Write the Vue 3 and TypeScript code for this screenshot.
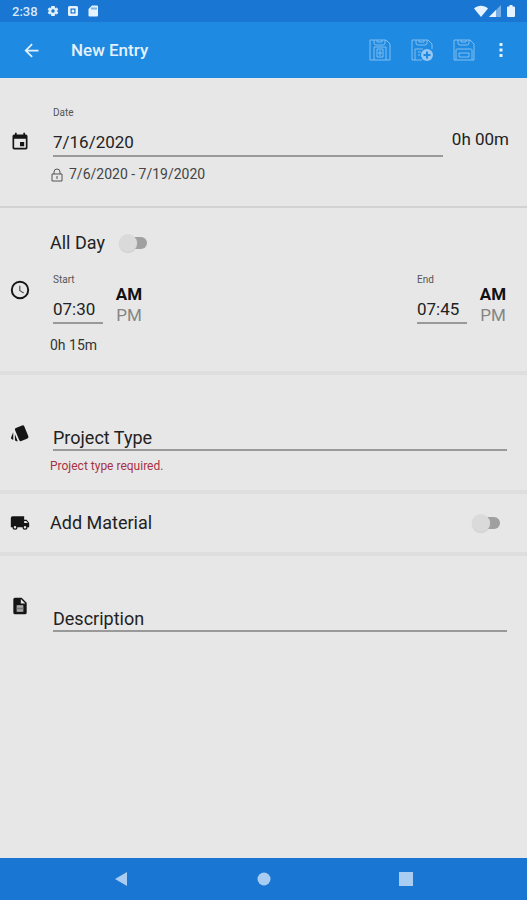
<script setup lang="ts">
import { ref } from 'vue'

type Meridiem = 'AM' | 'PM'
interface TimeEntry {
  id: string
  label: string
  time: string
  meridiem: Meridiem
}

const meridiems: Meridiem[] = ['AM', 'PM']
const date = ref('7/16/2020')
const allDay = ref(false)
const addMaterial = ref(false)
const projectType = ref('')
const description = ref('')
const times = ref<TimeEntry[]>([
  { id: 'start', label: 'Start', time: '07:30', meridiem: 'AM' },
  { id: 'end', label: 'End', time: '07:45', meridiem: 'AM' },
])
</script>

<template>
  <div class="screen">
    <div class="status-bar">
      <span class="clock">2:38</span>
      <svg class="status-icon" viewBox="0 0 24 24"><path stroke="#e6f2fd" stroke-width="2" stroke-linejoin="round" fill-rule="evenodd" d="M19.4 13a7.500 7.500 0 0 0 0-2l2.100-1.600-2-3.500-2.500 1a7.300 7.300 0 0 0-1.700-1L15 3h-6l-.4 2.900a7.300 7.300 0 0 0-1.700 1l-2.500-1-2 3.500L4.600 11a7.500 7.500 0 0 0 0 2l-2.100 1.600 2 3.500 2.500-1a7.300 7.300 0 0 0 1.700 1L9 21h6l.4-2.900a7.300 7.300 0 0 0 1.700-1l2.500 1 2-3.500zM12 7.500a4.500 4.500 0 1 1 0 9 4.500 4.500 0 0 1 0-9z" /></svg>
      <svg class="status-icon" viewBox="0 0 24 24"><path fill-rule="evenodd" d="M5 2h14a3 3 0 0 1 3 3v14a3 3 0 0 1-3 3H5a3 3 0 0 1-3-3V5a3 3 0 0 1 3-3zM7 7v10h10V7zM12 9a3 3 0 1 1 0 6 3 3 0 0 1 0-6z" /></svg>
      <svg class="status-icon" viewBox="0 0 24 24"><path fill-rule="evenodd" d="M20 1H10L3 8v13a2 2 0 0 0 2 2h15a2 2 0 0 0 2-2V3a2 2 0 0 0-2-2zM9 5h2v4H9zM13 5h2v4h-2zM17 5h2v4h-2z" /></svg>
      <span class="spacer"></span>
      <svg class="wifi" viewBox="0 0 14 12"><path d="M0 3.500C4-.3 10-.3 14 3.500L7 12z" /></svg>
      <svg class="signal" viewBox="0 0 12 12"><path opacity=".45" d="M12 0v12H0z" /><path d="M7 5v7H0z" /></svg>
      <svg class="battery" viewBox="0 0 8 12"><path d="M2.500 0h3v1.500H7a1 1 0 0 1 1 1V11a1 1 0 0 1-1 1H1a1 1 0 0 1-1-1V2.500a1 1 0 0 1 1-1h1.500z" /></svg>
    </div>

    <header class="app-bar">
      <button class="back" type="button" aria-label="Back">
        <svg viewBox="0 0 24 24"><path d="M20 11H7.800l5.600-5.600L12 4l-8 8 8 8 1.400-1.400L7.800 13H20z" /></svg>
      </button>
      <h1>New Entry</h1>
      <span class="spacer"></span>
      <button class="action" type="button" aria-label="Save and close">
        <svg viewBox="0 0 22 22"><path d="M1 1h16l4 4v16H1zM5 1v3a2 2 0 0 0 2 2h7a2 2 0 0 0 2-2V1M8 1v2h5V1M5 21V8h12v13M8 10h6v8H8zM11 11v6M9 14h4" /></svg>
      </button>
      <button class="action" type="button" aria-label="Save and add">
        <svg viewBox="0 0 22 22"><path d="M11 21H1V1h16l4 4v5M5 1v3a2 2 0 0 0 2 2h7a2 2 0 0 0 2-2V1M8 1v2h5V1M4 21V10h8M7 13h3M7 16h2" /><circle class="disc" cx="16" cy="16" r="6" /><path class="plus" d="M16 12.500v7M12.500 16h7" /></svg>
      </button>
      <button class="action" type="button" aria-label="Save">
        <svg viewBox="0 0 22 22"><path d="M1 1h16l4 4v16H1zM5 1v3a2 2 0 0 0 2 2h7a2 2 0 0 0 2-2V1M8 1v2h5V1M3 21V11a1 1 0 0 1 1-1h14a1 1 0 0 1 1 1v10M6 14h10v4H6z" /></svg>
      </button>
      <button class="more" type="button" aria-label="More options">
        <svg viewBox="0 0 4 16"><path d="M.5 1h3v3h-3zM.5 6.500h3v3h-3zM.5 12h3v3h-3z" /></svg>
      </button>
    </header>

    <main>
      <section class="row date-row">
        <svg class="row-icon" viewBox="0 0 24 24"><path d="M17 12h-5v5h5zM16 1v2H8V1H6v2H5a2 2 0 0 0-2 2v14a2 2 0 0 0 2 2h14a2 2 0 0 0 2-2V5a2 2 0 0 0-2-2h-1V1zM19 19H5V8h14z" /></svg>
        <div class="content">
          <div class="date-line">
            <div class="field grow">
              <label for="date">Date</label>
              <input id="date" v-model="date" type="text" />
            </div>
            <span class="total">0h 00m</span>
          </div>
          <p class="range">
            <svg viewBox="0 0 12 14"><path d="M1 6h10v7H1zM3 6V4a3 3 0 0 1 6 0v2M6 8v3" /></svg>
            7/6/2020 - 7/19/2020
          </p>
        </div>
      </section>

      <section class="row time-row">
        <svg class="row-icon" viewBox="0 0 24 24"><path d="M12 1a11 11 0 1 0 0 22 11 11 0 0 0 0-22zM12 20.700a8.700 8.700 0 1 1 0-17.400 8.700 8.700 0 0 1 0 17.400z" /><path fill="#555" d="M12.500 12.200V7H11v6l5 3.200.8-1.300z" /></svg>
        <div class="content">
          <div class="all-day">
            <label for="all-day">All Day</label>
            <input id="all-day" v-model="allDay" class="switch" type="checkbox" role="switch" />
          </div>
          <div class="times">
            <div v-for="entry in times" :key="entry.id" class="time">
              <div class="field short">
                <label :for="entry.id">{{ entry.label }}</label>
                <input :id="entry.id" v-model="entry.time" type="text" />
              </div>
              <div class="meridiem">
                <button
                  v-for="m in meridiems"
                  :key="m"
                  type="button"
                  :class="{ selected: entry.meridiem === m }"
                  :aria-pressed="entry.meridiem === m"
                  @click="entry.meridiem = m"
                >{{ m }}</button>
              </div>
            </div>
          </div>
          <p class="duration">0h 15m</p>
        </div>
      </section>

      <section class="row project-row">
        <svg class="row-icon" viewBox="0 0 24 24"><path d="M2.500 19.700l1.400.5V11.200l-2.500 5.900a2 2 0 0 0 1.100 2.600zM22 16L17.100 4a2 2 0 0 0-2.600-1.100L7.100 6A2 2 0 0 0 6 8.500l5 12a2 2 0 0 0 2.600 1.100L21 18.500a2 2 0 0 0 1-2.500zM5.900 19.800a2 2 0 0 0 2 2h1.400l-3.400-8.300z" /></svg>
        <div class="content">
          <div class="floating">
            <input id="project-type" v-model="projectType" type="text" placeholder=" " aria-describedby="project-error" />
            <label for="project-type">Project Type</label>
          </div>
          <p id="project-error" class="error">Project type required.</p>
        </div>
      </section>

      <section class="row material-row">
        <svg class="row-icon" viewBox="0 0 24 24"><path fill-rule="evenodd" d="M20 8h-3V4H3a2 2 0 0 0-2 2v11h2a3 3 0 0 0 6 0h6a3 3 0 0 0 6 0h2v-5zM6 18.500a1.500 1.500 0 1 1 0-3 1.500 1.500 0 0 1 0 3zM19.500 9.500l2 2.500H17V9.500zM18 18.500a1.500 1.500 0 1 1 0-3 1.500 1.500 0 0 1 0 3z" /></svg>
        <div class="content material">
          <label for="material">Add Material</label>
          <input id="material" v-model="addMaterial" class="switch" type="checkbox" role="switch" />
        </div>
      </section>

      <section class="row description-row">
        <svg class="row-icon" viewBox="0 0 24 24"><path d="M14 2H6a2 2 0 0 0-2 2v16a2 2 0 0 0 2 2h12a2 2 0 0 0 2-2V8zM13 9V3.500L18.500 9z" fill-rule="evenodd" /><path fill="#aaa" d="M8 11h8v8H8z" /><path fill="#777" d="M8 14h8v2H8z" /></svg>
        <div class="content">
          <div class="floating">
            <input id="description" v-model="description" type="text" placeholder=" " />
            <label for="description">Description</label>
          </div>
        </div>
      </section>
    </main>

    <nav class="nav-bar">
      <button type="button" aria-label="Navigate back"><svg viewBox="0 0 14 14"><path d="M13 0v14L1 7z" /></svg></button>
      <button type="button" aria-label="Home"><svg viewBox="0 0 14 14"><circle cx="7" cy="7" r="6.500" /></svg></button>
      <button type="button" aria-label="Recent apps"><svg viewBox="0 0 14 14"><path d="M0 0h14v14H0z" /></svg></button>
    </nav>
  </div>
</template>

<style>
body {
  margin: 0;
  background: #e7e7e7;
}
</style>

<style scoped>
* {
  box-sizing: border-box;
}
.screen {
  display: flex;
  flex-direction: column;
  min-height: 100vh;
  background: #e7e7e7;
  color: #222;
  font-family: Roboto, "Liberation Sans", sans-serif;
  font-size: 17px;
}
svg {
  display: block;
  flex: none;
}
button {
  padding: 0;
  border: 0;
  background: none;
  color: inherit;
  font: inherit;
  cursor: pointer;
}
p, h1 {
  margin: 0;
}
.spacer, .grow {
  flex: 1;
  min-width: 0;
}
.status-bar {
  display: flex;
  align-items: center;
  height: 22px;
  padding: 0 12px;
  background: #1976d2;
  color: #d8e9fa;
  fill: #e6f2fd;
}
.clock {
  width: 35px;
  font-size: 13px;
  font-weight: 500;
}
.status-icon {
  width: 12px;
  height: 12px;
  margin-right: 8px;
}
.wifi {
  width: 14px;
  height: 12px;
}
.signal {
  width: 12px;
  height: 12px;
  margin: 0 6px 0 1px;
}
.battery {
  width: 8px;
  height: 12px;
}
.app-bar {
  display: flex;
  align-items: center;
  height: 56px;
  padding: 0 10px;
  background: #1e8ae1;
  color: #e3f1fd;
  fill: #e3f1fd;
}
.app-bar button {
  display: flex;
  align-items: center;
  justify-content: center;
  height: 42px;
}
.app-bar h1 {
  padding-left: 18px;
  font-size: 17px;
  font-weight: 500;
}
.back {
  width: 43px;
}
.back svg {
  width: 21px;
  height: 21px;
}
.action {
  width: 42px;
}
.action svg {
  width: 22px;
  height: 22px;
  fill: none;
  stroke: #81bdf0;
  stroke-width: 1;
}
.action .disc {
  fill: #94c8f3;
  stroke: none;
}
.action .plus {
  stroke: #1e8ae1;
  stroke-width: 2;
}
.more {
  width: 32px;
}
.more svg {
  width: 4px;
  height: 16px;
}
main {
  flex: 1;
}
.row {
  display: flex;
  align-items: center;
  padding: 0 20px 0 10px;
  border-bottom: 4px solid #dedede;
}
.row-icon {
  width: 20px;
  height: 20px;
  margin-right: 20px;
  fill: #151515;
}
.content {
  flex: 1;
  min-width: 0;
}
.date-row {
  padding-right: 18px;
  border-bottom: 2px solid #d2d2d2;
}
.date-row .content {
  padding-top: 28px;
  padding-bottom: 22px;
}
.date-line {
  display: flex;
  align-items: flex-end;
  gap: 9px;
}
.field {
  display: flex;
  flex-direction: column;
  gap: 9px;
  margin-left: 3px;
}
.field label {
  color: #555;
  font-size: 10px;
  line-height: 14px;
}
.field input, .floating input {
  width: 100%;
  height: 28px;
  padding: 0;
  border: 0;
  border-bottom: 2px solid #999;
  border-radius: 0;
  outline: 0;
  background: none;
  color: inherit;
  font: inherit;
}
.total {
  padding-bottom: 4px;
  line-height: 28px;
}
.range {
  display: flex;
  align-items: center;
  gap: 6px;
  margin-top: 7px;
  padding-left: 1px;
  color: #444;
  font-size: 14px;
  line-height: 20px;
}
.range svg {
  width: 12px;
  height: 14px;
  margin-top: 2px;
  fill: none;
  stroke: #555;
}
.time-row .content {
  padding-top: 23px;
  padding-bottom: 16px;
}
.all-day, .material {
  display: flex;
  align-items: center;
  font-size: 18px;
  line-height: 24px;
}
.all-day {
  gap: 14px;
}
.switch {
  display: grid;
  align-items: center;
  width: 28px;
  height: 18px;
  margin: 0;
  appearance: none;
  cursor: pointer;
}
.switch::before, .switch::after {
  grid-area: 1 / 1;
  content: "";
}
.switch::before {
  height: 12px;
  margin-left: 4px;
  border-radius: 6px;
  background: #a0a0a0;
}
.switch::after {
  width: 18px;
  height: 18px;
  border-radius: 50%;
  background: #dadada;
  box-shadow: 0 1px 1px #ccc;
}
.switch:checked::after {
  justify-self: end;
  background: #1e8ae1;
}
.times {
  display: flex;
  justify-content: space-between;
  margin-top: 18px;
}
.time {
  display: flex;
  align-items: flex-end;
  gap: 12px;
}
.short {
  width: 50px;
  padding-bottom: 2px;
}
.meridiem {
  display: flex;
  flex-direction: column;
  width: 28px;
}
.meridiem button {
  color: #858585;
  line-height: 21px;
}
.meridiem .selected {
  color: #111;
  font-weight: 700;
}
.duration {
  margin-top: 9px;
  color: #333;
  font-size: 14px;
  line-height: 20px;
}
.project-row .content {
  padding-top: 50px;
  padding-bottom: 15px;
}
.floating {
  display: grid;
  margin-left: 3px;
  font-size: 18px;
}
.floating input, .floating label {
  grid-area: 1 / 1;
}
.floating input {
  height: 26px;
}
.floating label {
  line-height: 26px;
  pointer-events: none;
}
.floating input:not(:placeholder-shown) + label {
  margin-top: -20px;
  font-size: 10px;
}
.error {
  margin-top: 6px;
  color: #a83244;
  font-size: 12px;
  line-height: 18px;
}
.material-row .content {
  padding-top: 17px;
  padding-bottom: 17px;
}
.material {
  justify-content: space-between;
  padding-right: 7px;
}
.description-row {
  border-bottom: 0;
}
.description-row .content {
  padding-top: 50px;
  padding-bottom: 24px;
}
.nav-bar {
  display: flex;
  justify-content: center;
  height: 42px;
  background: #1976d2;
}
.nav-bar button {
  display: flex;
  align-items: center;
  justify-content: center;
  width: 27%;
}
.nav-bar svg {
  width: 14px;
  height: 14px;
  fill: #a9cdf2;
}
</style>
